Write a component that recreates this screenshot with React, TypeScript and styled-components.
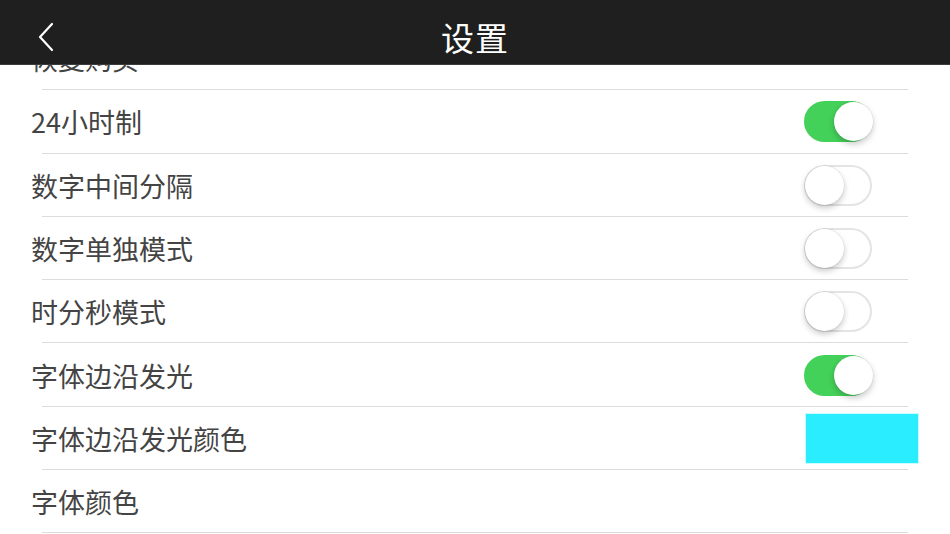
import React from "react";
import styled, { createGlobalStyle } from "styled-components";

const GlobalStyle = createGlobalStyle`
  html, body {
    margin: 0;
    padding: 0;
    background: #ffffff;
  }
  body {
    font-family: "Noto Sans CJK SC", "Noto Sans", sans-serif;
    overflow: hidden;
  }
`;

const Page = styled.div`
  width: 950px;
  height: 534px;
  display: flex;
  flex-direction: column;
  overflow: hidden;
  background: #ffffff;
`;

const NavBar = styled.header`
  position: relative;
  z-index: 2;
  flex: 0 0 auto;
  height: 64px;
  display: grid;
  grid-template-columns: 120px 1fr 120px;
  align-items: center;
  background: #1f1f1f;
  border-bottom: 1px solid #3b3b3b;
`;

const BackButton = styled.button`
  justify-self: start;
  margin-left: 34px;
  margin-top: 10px;
  width: 24px;
  height: 32px;
  padding: 0;
  border: 0;
  background: none;
  display: flex;
  align-items: center;
  justify-content: center;
`;

const Title = styled.h1`
  margin: 0;
  padding-top: 10px;
  text-align: center;
  color: #ffffff;
  font-size: 33px;
  font-weight: 400;
  letter-spacing: 1px;
`;

const Scroller = styled.div`
  flex: 1;
  overflow: hidden;
`;

const List = styled.ul`
  list-style: none;
  margin: -38px 0 0;
  padding: 0;
`;

const Row = styled.li`
  position: relative;
  height: 63.3px;
  box-sizing: border-box;
  display: flex;
  align-items: center;
  justify-content: space-between;
  padding-left: 31px;

  &::after {
    content: "";
    position: absolute;
    left: 42px;
    right: 42px;
    bottom: 0;
    height: 1px;
    background: #dcdcdc;
  }
`;

const Label = styled.span`
  color: #444444;
  font-size: 27px;
  line-height: 1;
`;

const Track = styled.div<{ $on: boolean }>`
  position: relative;
  margin-right: 78px;
  width: 68px;
  height: 41px;
  box-sizing: border-box;
  border-radius: 21px;
  background: ${(p) => (p.$on ? "#44d15a" : "#ffffff")};
  border: 2px solid ${(p) => (p.$on ? "#44d15a" : "#e4e4e4")};
`;

const Knob = styled.span<{ $on: boolean }>`
  position: absolute;
  top: -1px;
  left: ${(p) => (p.$on ? "28px" : "-1px")};
  width: 39px;
  height: 39px;
  border-radius: 50%;
  background: #ffffff;
  box-shadow: 0 3px 6px rgba(0, 0, 0, 0.22), 0 0 0 0.5px rgba(0, 0, 0, 0.08);
`;

const Swatch = styled.div<{ $color: string }>`
  margin-right: 31px;
  width: 114px;
  height: 51px;
  box-sizing: border-box;
  background: ${(p) => p.$color};
  border: 1px solid #c9fbff;
`;

const Toggle = ({ on }: { on: boolean }) => (
  <Track $on={on}>
    <Knob $on={on} />
  </Track>
);

type Item =
  | { label: string; kind: "plain" }
  | { label: string; kind: "toggle"; on: boolean }
  | { label: string; kind: "color"; color: string };

const items: Item[] = [
  { label: "恢复购买", kind: "plain" },
  { label: "24小时制", kind: "toggle", on: true },
  { label: "数字中间分隔", kind: "toggle", on: false },
  { label: "数字单独模式", kind: "toggle", on: false },
  { label: "时分秒模式", kind: "toggle", on: false },
  { label: "字体边沿发光", kind: "toggle", on: true },
  { label: "字体边沿发光颜色", kind: "color", color: "#2aeeff" },
  { label: "字体颜色", kind: "plain" },
];

const App = () => (
  <Page>
    <GlobalStyle />
    <NavBar>
      <BackButton aria-label="返回">
        <svg width="18" height="30" viewBox="0 0 18 30" fill="none">
          <polyline points="15,2 3,15 15,28" stroke="#ffffff" strokeWidth="2.2" strokeLinecap="round" strokeLinejoin="round" />
        </svg>
      </BackButton>
      <Title>设置</Title>
      <span />
    </NavBar>
    <Scroller>
      <List>
        {items.map((item) => (
          <Row key={item.label}>
            <Label>{item.label}</Label>
            {item.kind === "toggle" && <Toggle on={item.on} />}
            {item.kind === "color" && <Swatch $color={item.color} />}
          </Row>
        ))}
      </List>
    </Scroller>
  </Page>
);

export default App;
